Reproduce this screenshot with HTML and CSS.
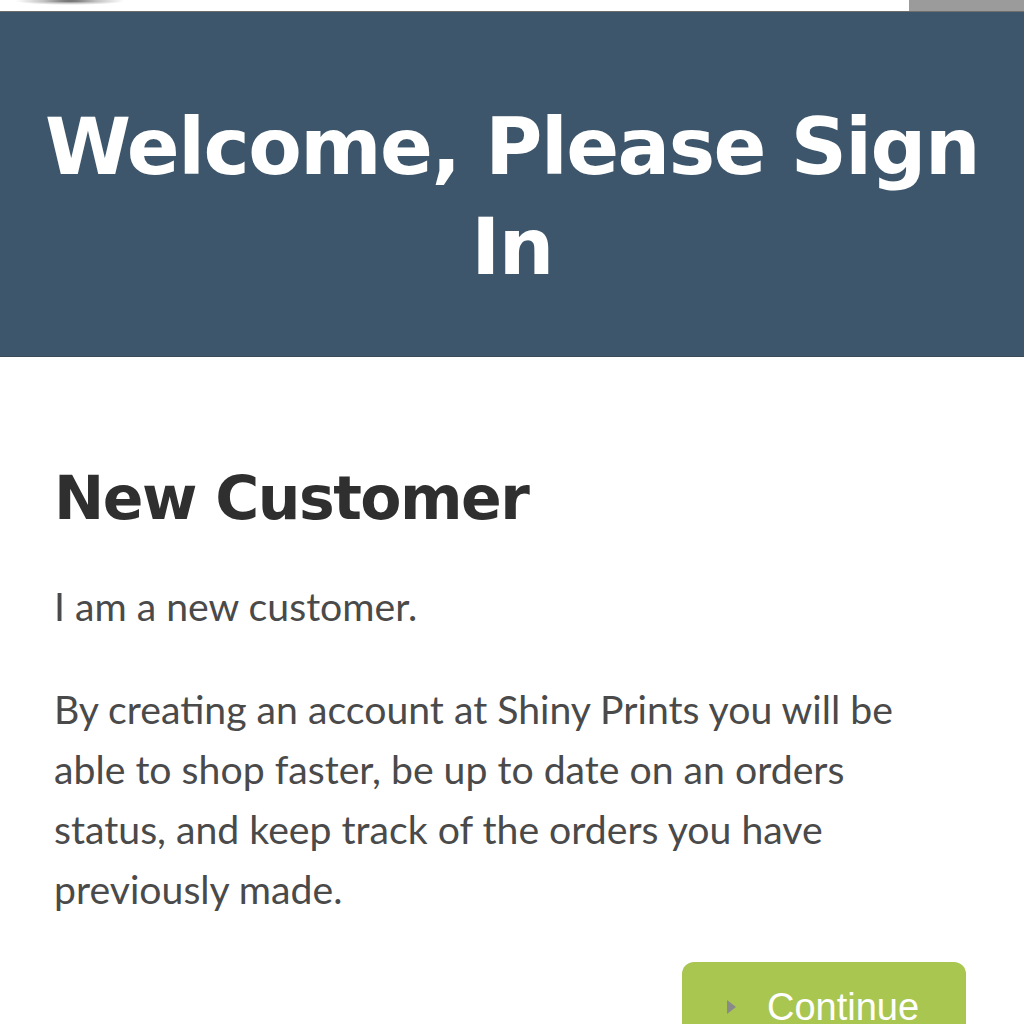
FILE: index.html
```html
<!DOCTYPE html>
<html lang="en">
<head>
<meta charset="utf-8">
<title>Welcome, Please Sign In</title>
<link rel="stylesheet" href="styles.css">
</head>
<body>
<div class="topbar">
  <div class="logo-shadow"></div>
  <div class="topbar-box"></div>
</div>
<header class="banner">
  <h1 class="banner-title">Welcome, Please Sign In</h1>
</header>
<main class="content">
  <h2 class="section-title">New Customer</h2>
  <p class="text">I am a new customer.</p>
  <p class="text">By creating an account at Shiny Prints you will be able to shop faster, be up to date on an orders status, and keep track of the orders you have previously made.</p>
  <div class="actions">
    <a class="btn" href="#"><span class="btn-arrow"></span><span class="btn-label">Continue</span></a>
  </div>
</main>
</body>
</html>
```
FILE: styles.css
```css
html, body {
  margin: 0;
  padding: 0;
  background: #fff;
}
body {
  width: 1024px;
  overflow: hidden;
}
.topbar {
  height: 11px;
  display: flex;
  justify-content: space-between;
  border-bottom: 1px solid #6e6e6e;
  background: #fff;
}
.logo-shadow {
  width: 110px;
  height: 8px;
  margin-left: 15px;
  margin-top: -3px;
  background: radial-gradient(ellipse at center, rgba(40,40,40,0.75) 0%, rgba(80,80,80,0.35) 35%, rgba(255,255,255,0) 70%);
}
.topbar-box {
  width: 115px;
  background: #9b9b9b;
}
.banner {
  height: 345px;
  box-sizing: border-box;
  padding-top: 26px;
  background: #3d566b;
  border-bottom: 1px solid #3a4a56;
  display: flex;
  align-items: center;
  justify-content: center;
}
.banner-title {
  margin: 0;
  padding: 0 20px;
  color: #fff;
  font-family: "DejaVu Sans", sans-serif;
  font-weight: bold;
  font-size: 78px;
  line-height: 100px;
  text-align: center;
  letter-spacing: -1.5px;
}
.content {
  padding: 0 56px 0 54px;
}
.section-title {
  margin: 101px 0 0;
  font-family: "DejaVu Sans", sans-serif;
  font-weight: bold;
  font-size: 60px;
  line-height: 80px;
  letter-spacing: -1.5px;
  color: #2f2f2f;
}
.text {
  margin: 0;
  max-width: 895px;
  padding-top: 38px;
  font-family: "Lato", sans-serif;
  font-size: 39.2px;
  line-height: 60px;
  color: #4a4a4a;
}
.text + .text {
  padding-top: 43px;
}
.actions {
  display: flex;
  justify-content: flex-end;
  margin-top: 43px;
  padding-right: 2px;
}
.btn {
  display: flex;
  align-items: center;
  width: 284px;
  height: 90px;
  box-sizing: border-box;
  padding: 0 0 0 45px;
  background: #a9c651;
  border-radius: 12px;
  color: #fff;
  text-decoration: none;
  font-family: "Liberation Sans", Arial, sans-serif;
  font-size: 38px;
  line-height: 38px;
}
.btn-arrow {
  width: 0;
  height: 0;
  border-top: 7px solid transparent;
  border-bottom: 7px solid transparent;
  border-left: 9px solid #8a8a8a;
  margin-right: 31px;
}
```
